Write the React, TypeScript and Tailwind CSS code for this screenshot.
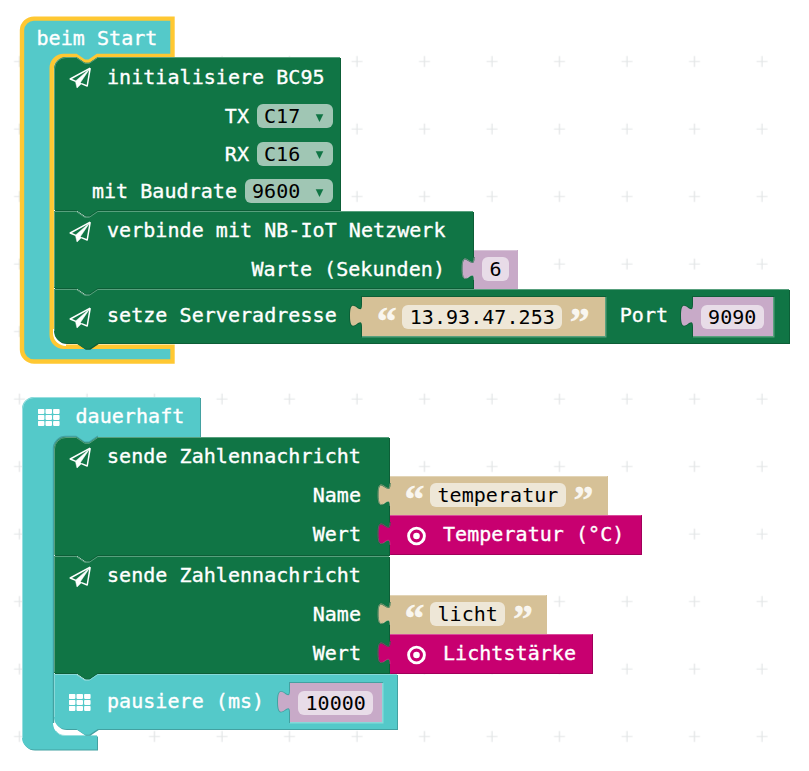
import type { ReactNode } from "react";

const NOTCH = "l 8.5 5.8 h 4.5 l 8.5 -5.8";
const NOTCH_BACK = "l -8.5 5.8 h -4.5 l -8.5 -5.8";
const TAB = "v 7.5 c 0 15 -12 -12 -12 11.25 s 12 -3.75 12 11.25";
const TAB_UP = "c 0 -15 -12 12 -12 -11.25 s 12 3.75 12 -11.25";

type Tone = { fill: string; dark: string; light: string };

const GREEN: Tone = { fill: "#107545", dark: "#0d5e37", light: "#58a07d" };
const CYAN: Tone = { fill: "#54c9c9", dark: "#43a1a1", light: "#87d9d9" };
const TAN: Tone = { fill: "#d6c197", dark: "#ab9a79", light: "#e2d4b6" };
const LILAC: Tone = { fill: "#c8aac8", dark: "#a088a0", light: "#d8c4d8" };
const PINK: Tone = { fill: "#c80070", dark: "#a0005a", light: "#d94d9b" };

function Plane() {
  return (
    <svg className="h-[22px] w-[23px] shrink-0" viewBox="0 0 23 22" fill="none">
      <path d="M21.2 1.2 L1.2 12 L6.8 14.4 M12.4 16.6 L18.2 19 L21.2 1.2" stroke="white" strokeWidth="1.5" strokeLinejoin="round" />
      <path d="M21 1.4 L6.4 14.2 L8 21 L12.6 16.6 L11.4 15.6 Z" fill="white" stroke="white" strokeWidth="0.5" />
    </svg>
  );
}

function Tiles() {
  return (
    <svg className="h-[17px] w-[22px] shrink-0" viewBox="0 0 22 17" fill="white">
      {[0, 1, 2].map((r) =>
        [0, 1, 2].map((c) => (
          <rect key={`${r}${c}`} x={c * 7.6 - 0.1} y={r * 6} width="6.5" height="4.9" rx="0.8" />
        )),
      )}
    </svg>
  );
}

function Target() {
  return (
    <svg className="mt-[3px] h-5 w-5 shrink-0" viewBox="0 0 20 20" fill="none">
      <circle cx="9.5" cy="10" r="7.9" stroke="white" strokeWidth="2.9" />
      <circle cx="9.5" cy="10" r="3.3" fill="white" />
    </svg>
  );
}

function StatementShape({ w, h, tone, first, last }: { w: number; h: number; tone: Tone; first?: boolean; last?: boolean }) {
  const start = first ? "M 0 12 A 12 12 0 0 1 12 0 H 22.3" : "M 0 0 H 22.3";
  const end = last ? `H 12 A 12 12 0 0 1 0 ${h - 13} Z` : "H 0 Z";
  const body = `${start} ${NOTCH} H ${w - 1} V ${h - 1} H 43.8 ${NOTCH_BACK} ${end}`;
  const light = first
    ? `M 0.5 ${h - 1} V 12 A 11.5 11.5 0 0 1 12 0.5 H 22.3 ${NOTCH} H ${w - 1}`
    : `M 0.5 ${last ? h - 13 : h - 2} V 0.5 H 22.3 ${NOTCH} H ${w - 1}`;
  return (
    <svg className="absolute inset-0 overflow-visible" width={w} height={h}>
      <path d={body} fill={tone.dark} transform="translate(1 1)" />
      <path d={body} fill={tone.fill} />
      <path d={light} fill="none" stroke={tone.light} strokeWidth="1" />
    </svg>
  );
}

function ValueShape({ w, h, tone, socket }: { w: number; h: number; tone: Tone; socket?: Tone }) {
  const body = `M 0 0 ${TAB} V ${h} H ${w} V 0 Z`;
  return (
    <svg className="absolute inset-0 overflow-visible" width={w} height={h}>
      {socket ? (
        <>
          <path d={body} fill={socket.dark} stroke={socket.dark} strokeWidth="2" />
          <path d={`M 0 ${h + 0.5} H ${w + 0.5} V 0`} fill="none" stroke={socket.light} strokeWidth="2" />
          <path d={body} fill={tone.fill} />
        </>
      ) : (
        <>
          <path d={body} fill={tone.fill} stroke="#0d5e37" strokeWidth="1.2" strokeDasharray="0 7 38 1000" />
          <path d={`M 0.5 ${h - 0.5} H ${w - 0.5} V 1`} fill="none" stroke={tone === PINK ? tone.dark : tone.fill} />
          <path d={`M 0 0.5 H ${w - 1}`} stroke={tone.light} />
          <path d={`M 0 30 ${TAB_UP}`} fill="none" stroke={tone.light} strokeWidth="0.5" />
        </>
      )}
    </svg>
  );
}

function Statement(props: { w: number; h: number; tone?: Tone; first?: boolean; last?: boolean; children: ReactNode }) {
  const { w, h, tone = GREEN, first, last, children } = props;
  return (
    <div className="relative shrink-0" style={{ width: w, height: h }}>
      <StatementShape w={w} h={h} tone={tone} first={first} last={last} />
      <div className="relative flex h-full flex-col">{children}</div>
    </div>
  );
}

function Title({ icon, low, children }: { icon: ReactNode; low?: boolean; children: ReactNode }) {
  return (
    <div className="flex h-[39px] shrink-0 items-center pl-[15px]">
      <span className="mt-[3px] flex w-[38px]">{icon}</span>
      <span className={low ? "" : "mb-[2px]"}>{children}</span>
    </div>
  );
}

function Dropdown({ label, value, wide }: { label: string; value: string; wide?: boolean }) {
  return (
    <div className="flex h-[37.5px] items-center justify-end gap-2 pr-[8px]">
      <span>{label}</span>
      <span
        className={`flex h-6 items-center justify-between rounded-md bg-[#a0c6b4] pr-[9px] pl-[7px] text-black [-webkit-text-stroke:0] ${wide ? "w-[88px]" : "w-[76px]"}`}
      >
        {value}
        <svg className="mt-[3px] h-2 w-[9px]" viewBox="0 0 9 8">
          <path d="M0.7 0.3 H8.3 L4.5 7.9 Z" fill="#107545" />
        </svg>
      </span>
    </div>
  );
}

function Field({ children, kind }: { children: ReactNode; kind: "text" | "number" }) {
  return (
    <span
      className={`flex h-6 items-center rounded-md px-[7.5px] text-black [-webkit-text-stroke:0] ${kind === "text" ? "bg-[#eee7d7]" : "bg-[#e8dce8]"}`}
    >
      {children}
    </span>
  );
}

function NumberValue({ value, w, h = 39, socket }: { value: string; w: number; h?: number; socket?: Tone }) {
  return (
    <div className="relative flex shrink-0 items-center justify-center" style={{ width: w, height: h }}>
      <ValueShape w={w} h={h} tone={LILAC} socket={socket} />
      <div className={socket ? "relative mr-px" : "relative mr-px mb-px"}>
        <Field kind="number">{value}</Field>
      </div>
    </div>
  );
}

function Quote({ children }: { children: string }) {
  return (
    <span className="h-[24px] w-[18px] text-center font-['Liberation_Serif',serif] text-[40px] leading-[34px] font-bold text-[#f9f6ef]">
      {children}
    </span>
  );
}

function TextValue({ value, w, h = 39, socket }: { value: string; w: number; h?: number; socket?: Tone }) {
  return (
    <div className="relative shrink-0" style={{ width: w, height: h }}>
      <ValueShape w={w} h={h} tone={TAN} socket={socket} />
      <div className={`relative flex h-full items-center gap-[7.5px] ${socket ? "pl-[15px]" : "pb-px pl-[14.5px]"}`}>
        <Quote>“</Quote>
        <Field kind="text">{value}</Field>
        <Quote>”</Quote>
      </div>
    </div>
  );
}

function SensorValue({ label, w }: { label: string; w: number }) {
  return (
    <div className="relative shrink-0" style={{ width: w, height: 40 }}>
      <ValueShape w={w} h={40} tone={PINK} />
      <div className="relative flex h-[39px] items-center gap-[16px] pl-[17px]">
        <Target />
        <span className="mb-[2px]">{label}</span>
      </div>
    </div>
  );
}

function Input({ label, w, children }: { label: string; w: number; children: ReactNode }) {
  return (
    <div className="flex h-[39px] shrink-0">
      <div className="flex shrink-0 items-center justify-end pr-[29px] pb-[2px]" style={{ width: w }}>
        {label}
      </div>
      {children}
    </div>
  );
}

function SendNumber(props: { name: string; nameW: number; sensor: string; sensorW: number; h: number; first?: boolean }) {
  const { name, nameW, sensor, sensorW, h, first } = props;
  return (
    <Statement w={336} h={h} first={first}>
      <Title icon={<Plane />}>sende Zahlennachricht</Title>
      <Input label="Name" w={336}>
        <TextValue value={name} w={nameW} />
      </Input>
      <Input label="Wert" w={336}>
        <SensorValue label={sensor} w={sensorW} />
      </Input>
    </Statement>
  );
}

function Workspace({ children }: { children: ReactNode }) {
  return (
    <main className="relative h-[771px] w-[809px] overflow-hidden bg-white font-['DejaVu_Sans_Mono',monospace] text-[20px] leading-6 tracking-[0.05px] whitespace-pre text-white [-webkit-text-stroke:0.35px_white]">
      <svg className="absolute inset-0" width="809" height="771">
        <defs>
          <pattern id="grid" x="-14.5" y="27.5" width="67.5" height="67.5" patternUnits="userSpaceOnUse">
            <path d="M28.5 34 H39.5 M34 28.5 V39.5" stroke="#e2e5e6" strokeWidth="1.2" />
          </pattern>
        </defs>
        <rect y="50" width="809" height="721" fill="url(#grid)" />
      </svg>
      {children}
    </main>
  );
}

export default function App() {
  return (
    <Workspace>
      <section className="absolute top-[18px] left-[22px] h-[344px] w-[768px]">
        <svg className="absolute inset-0 overflow-visible" width="768" height="344">
          <path
            d="M 0 12 A 12 12 0 0 1 12 0.6 H 150.5 V 37.9 H 75.5 l -8.5 5.8 h -4.5 l -8.5 -5.8 H 42 A 12 12 0 0 0 29.7 49.9 V 316.9 A 12 12 0 0 0 42 328.7 H 150.5 V 343.5 H 12 A 12 12 0 0 1 0 331.5 Z"
            fill="#54c9c9"
            stroke="#ffc832"
            strokeWidth="4.4"
          />
          <path d="M32 311 V316 A 12 12 0 0 0 44 327" fill="none" stroke="white" strokeWidth="2" />
        </svg>
        <div className="relative flex h-[39px] items-center pl-[14.5px]">beim Start</div>
        <div className="relative flex flex-col pl-8">
          <Statement w={287} h={154} first>
            <Title low icon={<Plane />}>
              initialisiere BC95
            </Title>
            <div className="mt-[1.3px] flex flex-col">
              <Dropdown label="TX" value="C17" />
              <Dropdown label="RX" value="C16" />
              <Dropdown label="mit Baudrate" value="9600" wide />
            </div>
          </Statement>
          <Statement w={420} h={78}>
            <Title icon={<Plane />}>verbinde mit NB-IoT Netzwerk</Title>
            <Input label="Warte (Sekunden)" w={420}>
              <NumberValue value="6" w={44} />
            </Input>
          </Statement>
          <Statement w={736} h={55} last>
            <div className="flex h-full items-center">
              <Title icon={<Plane />}>
                <span className="mb-[2px] block">setze Serveradresse</span>
              </Title>
              <div className="w-[25px]" />
              <TextValue value="13.93.47.253" w={243} socket={GREEN} />
              <span className="mb-[3px] w-[88px] pl-[15px]">Port</span>
              <NumberValue value="9090" w={80} socket={GREEN} />
            </div>
          </Statement>
        </div>
      </section>

      <section className="absolute top-[397px] left-[22px] h-[354px] w-[620px]">
        <svg className="absolute inset-0 overflow-visible" width="620" height="354">
          <path
            d="M 0 12 A 12 12 0 0 1 12 0 H 178 V 40 H 75.5 l -8.5 5.8 h -4.5 l -8.5 -5.8 H 42 A 12 12 0 0 0 30 52 V 326.5 A 12 12 0 0 0 42 338.5 H 75 V 352.5 H 12 A 12 12 0 0 1 0 340.5 Z"
            fill="#43a1a1"
            transform="translate(1 1)"
          />
          <path
            d="M 0 12 A 12 12 0 0 1 12 0 H 178 V 40 H 75.5 l -8.5 5.8 h -4.5 l -8.5 -5.8 H 42 A 12 12 0 0 0 31 52 V 326.5 A 12 12 0 0 0 43 338.5 H 75 V 352.5 H 12 A 12 12 0 0 1 0 340.5 Z"
            fill="#54c9c9"
          />
          <path d="M 0.5 341 V 12 A 11.5 11.5 0 0 1 12 0.5 H 178 M 34 334 Q 37 338.5 43 338.5 H 75" fill="none" stroke="#98dfdf" />
          <path d="M 76 39.5 H 75.5 l -8.5 5.8 h -4.5 l -8.5 -5.8 H 44 A 12 12 0 0 0 31.5 51 V 326" fill="none" stroke="#43a1a1" strokeWidth="1.4" />
        </svg>
        <div className="relative flex h-[40px] items-center pl-4">
          <span className="flex w-[37.5px]">
            <Tiles />
          </span>
          <span className="mb-[3px]">dauerhaft</span>
        </div>
        <div className="relative flex flex-col pl-8">
          <SendNumber first h={119} name="temperatur" nameW={218} sensor="Temperatur (°C)" sensorW={252} />
          <SendNumber h={118} name="licht" nameW={157} sensor="Lichtstärke" sensorW={203} />
          <Statement w={344} h={56} tone={CYAN} last>
            <div className="flex items-center pt-[9px]">
              <div className="-mt-[3px]">
                <Title low icon={<Tiles />}>
                  <span className="block pb-px">pausiere (ms)</span>
                </Title>
              </div>
              <div className="w-[26px]" />
              <NumberValue value="10000" w={92} socket={CYAN} />
            </div>
          </Statement>
        </div>
      </section>
    </Workspace>
  );
}
